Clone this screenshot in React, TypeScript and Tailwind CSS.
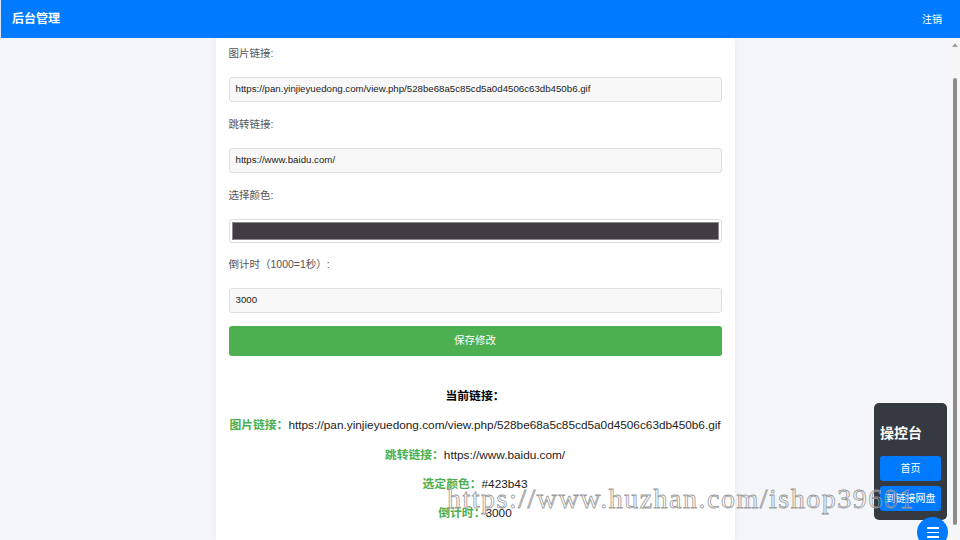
import { useState } from "react";

const font = "font-['Liberation_Sans','Noto_Sans_CJK_SC',sans-serif]";

const imgUrl = "https://pan.yinjieyuedong.com/view.php/528be68a5c85cd5a0d4506c63db450b6.gif";
const jumpUrl = "https://www.baidu.com/";

function Field({ label, children, tight }: { label: string; children: React.ReactNode; tight?: boolean }) {
  return (
    <div className={tight ? "mb-[13px]" : "mb-[14px]"}>
      <div className="h-[16px] leading-[16px] text-[10.5px] text-[#555] mb-[16px]">{label}</div>
      {children}
    </div>
  );
}

function TextBox({ value }: { value: string }) {
  return (
    <div className="h-[25px] flex items-center px-[6px] bg-[#f8f8f8] border border-[#dedede] rounded-[3px] text-[9.7px] text-[#222]">
      {value}
    </div>
  );
}

export default function App() {
  const [color] = useState("#423b43");

  return (
    <div className={`relative w-[960px] h-[540px] flex flex-col overflow-hidden bg-[#f4f6f9] ${font}`}>
      {/* Top bar */}
      <header className="h-[38px] shrink-0 flex items-center justify-between pl-[11px] pr-[18px] bg-[#007bff] border-l border-[#dbe6f5]">
        <span className="text-[12px] font-bold text-white">后台管理</span>
        <span className="text-[10px] text-white">注销</span>
      </header>

      <div className="flex-1 flex min-h-0">
        <main className="flex-1 flex justify-center">
          <div className="w-[519px] bg-white shadow-[0_0_8px_rgba(0,0,0,0.06)] px-[13px] pt-[7px]">
            <Field label="图片链接:">
              <TextBox value={imgUrl} />
            </Field>
            <Field label="跳转链接:">
              <TextBox value={jumpUrl} />
            </Field>
            <Field label="选择颜色:" tight>
              <div className="h-[24px] p-[2px] bg-white border border-[#dedede] rounded-[3px]">
                <div className="h-full border border-[#8a8a8a]" style={{ backgroundColor: color }} />
              </div>
            </Field>
            <Field label="倒计时（1000=1秒）:">
              <TextBox value="3000" />
            </Field>
            <button className="w-full h-[30px] -mt-[1px] rounded-[3px] bg-[#4caf50] text-white text-[10.5px]">
              保存修改
            </button>

            <div className="mt-[31px] flex flex-col items-center gap-[11.3px] text-[11.8px] leading-[18px] text-[#222]">
              <div className="font-bold text-black">当前链接：</div>
              <div>
                <span className="font-bold text-[#4caf50]">图片链接：</span>
                {imgUrl}
              </div>
              <div>
                <span className="font-bold text-[#4caf50]">跳转链接：</span>
                {jumpUrl}
              </div>
              <div>
                <span className="font-bold text-[#4caf50]">选定颜色：</span>
                {color}
              </div>
              <div>
                <span className="font-bold text-[#4caf50]">倒计时：</span>
                3000
              </div>
            </div>
          </div>
        </main>

        {/* Scrollbar */}
        <div className="w-[10px] shrink-0 bg-[#f7f7f7] flex flex-col items-center pt-[5px]">
          <div className="w-0 h-0 border-l-[3px] border-r-[3px] border-b-[4px] border-l-transparent border-r-transparent border-b-[#a0a0a0]" />
          <div className="mt-[31px] w-[4px] h-[447px] rounded-full bg-[#8c8c8c]" />
        </div>
      </div>

      {/* Control panel */}
      <div className="absolute left-[874px] top-[403px] w-[73px] h-[117px] rounded-[5px] bg-[#343a40] px-[6px] pt-[19px]">
        <div className="text-[14px] font-bold text-white leading-[22px]">操控台</div>
        <div className="mt-[12px] flex flex-col gap-[5px]">
          <button className="h-[25px] rounded-[3px] bg-[#007bff] text-white text-[10px]">首页</button>
          <button className="h-[25px] rounded-[3px] bg-[#007bff] text-white text-[10px] whitespace-nowrap">到链接网盘</button>
        </div>
      </div>

      {/* Floating menu button */}
      <div className="absolute left-[917px] top-[517px] w-[31px] h-[31px] rounded-full bg-[#007bff] flex flex-col items-center justify-center gap-[3px]">
        <div className="w-[12px] h-[1.5px] bg-white" />
        <div className="w-[12px] h-[1.5px] bg-white" />
        <div className="w-[12px] h-[1.5px] bg-white" />
      </div>

      {/* Watermark */}
      <div className="pointer-events-none absolute left-[447px] top-[478px] whitespace-nowrap font-['Liberation_Serif',serif] text-[28px] tracking-[1.5px] text-transparent [-webkit-text-stroke:0.8px_#9a9a9a]">
        https://www.huzhan.com/ishop39601
      </div>
    </div>
  );
}
